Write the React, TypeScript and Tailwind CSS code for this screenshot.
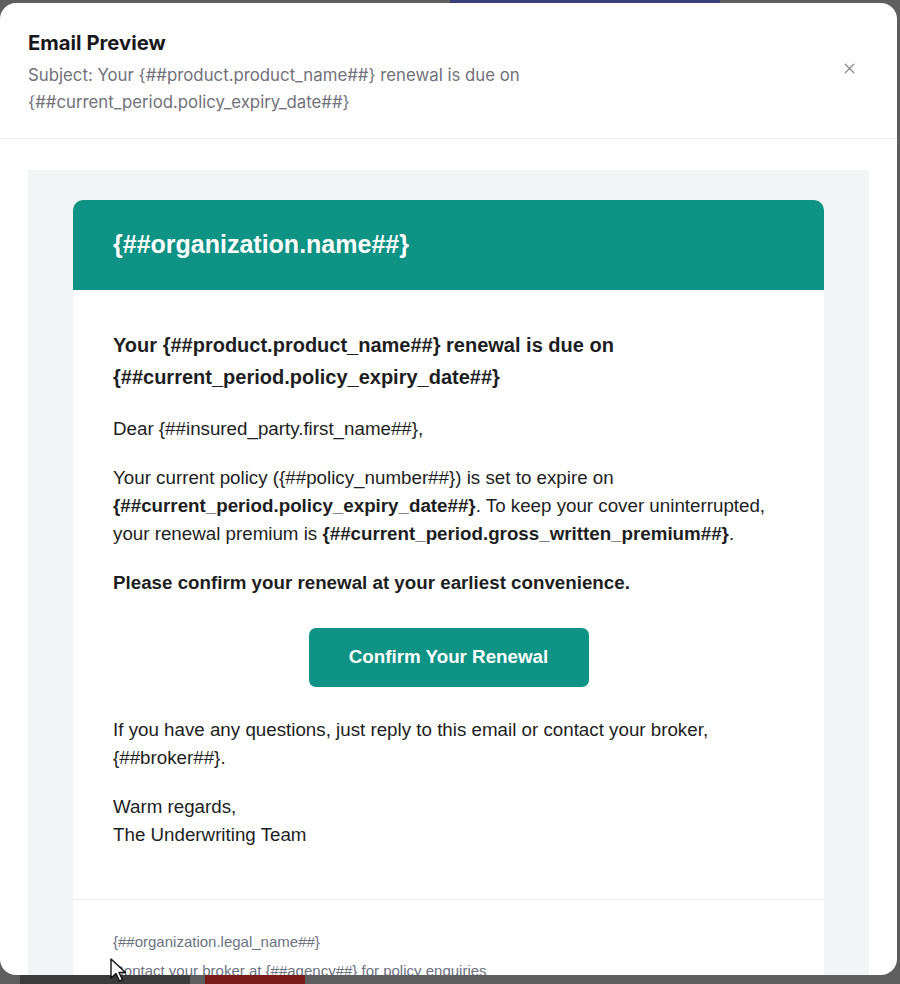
import React from "react";

const sans = { fontFamily: '"Liberation Sans", Arial, sans-serif' };

export default function App() {
  return (
    <div className="relative w-[900px] h-[984px] overflow-hidden bg-[#5e5e5e]">
      {/* background page hints behind overlay */}
      <div className="absolute left-[450px] top-0 w-[270px] h-[4px] bg-[#3a3f7a]" />
      <div className="absolute left-[20px] bottom-0 w-[170px] h-[9px] bg-[#3b3b3b]" />
      <div className="absolute left-[205px] bottom-0 w-[100px] h-[9px] bg-[#7a1c1c]" />

      <div className="relative flex flex-col w-[897px] h-[972px] mt-[3px] rounded-[16px] bg-white overflow-hidden">
        {/* Header */}
        <div className="relative flex items-start justify-between px-[28px] pt-[26px] pb-[22px] border-b border-[#eceef1]" style={{ fontFamily: 'Inter, "Noto Sans", sans-serif' }}>
          <div className="flex flex-col">
            <h2 className="text-[20.3px] leading-[28px] font-bold text-[#18181b]">Email Preview</h2>
            <p className="mt-[5px] text-[16.8px] leading-[27px] text-[#71717a] w-[540px]">
              Subject: Your {"{##product.product_name##}"} renewal is due on {"{##current_period.policy_expiry_date##}"}
            </p>
          </div>
          <button className="mt-[31px] mr-[11px] text-[#8a8a8f]">
            <svg width="17" height="17" viewBox="0 0 24 24" fill="none" stroke="currentColor" strokeWidth="1.8" strokeLinecap="round">
              <path d="M18 6 6 18" />
              <path d="m6 6 12 12" />
            </svg>
          </button>
        </div>

        {/* Body */}
        <div className="flex-1 overflow-hidden px-[28px] pt-[31px]">
          <div className="bg-[#f3f4f6] px-[45px] pt-[30px] pb-[40px]">
            <div className="bg-white rounded-t-[10px] overflow-hidden" style={sans}>
              <div className="h-[90px] bg-[#0e9384] flex items-center px-[40px]">
                <span className="text-white text-[25px] font-bold">{"{##organization.name##}"}</span>
              </div>
              <div className="px-[40px] pt-[39px] pb-[50px] text-[#1c1e21]">
                <h1 className="text-[20px] leading-[32px] font-bold">
                  Your {"{##product.product_name##}"} renewal is due on {"{##current_period.policy_expiry_date##}"}
                </h1>
                <p className="mt-[22px] text-[18.75px] leading-[28px]">Dear {"{##insured_party.first_name##}"},</p>
                <p className="mt-[21px] text-[18.75px] leading-[28px]">
                  Your current policy ({"{##policy_number##}"}) is set to expire on{" "}
                  <strong>{"{##current_period.policy_expiry_date##}"}</strong>. To keep your cover uninterrupted, your renewal premium is{" "}
                  <strong>{"{##current_period.gross_written_premium##}"}</strong>.
                </p>
                <p className="mt-[21px] text-[18.75px] leading-[28px] font-bold">Please confirm your renewal at your earliest convenience.</p>
                <div className="mt-[31px] flex justify-center">
                  <a className="w-[280px] h-[59px] rounded-[7px] bg-[#0e9384] flex items-center justify-center text-white text-[18.75px] font-bold">
                    Confirm Your Renewal
                  </a>
                </div>
                <p className="mt-[29px] text-[18.75px] leading-[28px]">
                  If you have any questions, just reply to this email or contact your broker, {"{##broker##}"}.
                </p>
                <p className="mt-[21px] text-[18.75px] leading-[28px]">
                  Warm regards,
                  <br />
                  The Underwriting Team
                </p>
              </div>
              <div className="border-t border-[#e8eaed] px-[40px] pt-[32px] text-[#6b7280] text-[15px] leading-[20px]">
                <p>{"{##organization.legal_name##}"}</p>
                <p className="mt-[9px]">Contact your broker at {"{##agency##}"} for policy enquiries</p>
              </div>
            </div>
          </div>
        </div>
      </div>

      {/* mouse cursor */}
      <svg className="absolute left-[110px] top-[958px]" width="20" height="26" viewBox="0 0 20 26">
        <path d="M1 1 L1 20 L6 15.5 L9.5 23 L12.5 21.7 L9 14.5 L15.5 14.5 Z" fill="#ffffff" stroke="#111" strokeWidth="1.4" strokeLinejoin="round" />
      </svg>
    </div>
  );
}
